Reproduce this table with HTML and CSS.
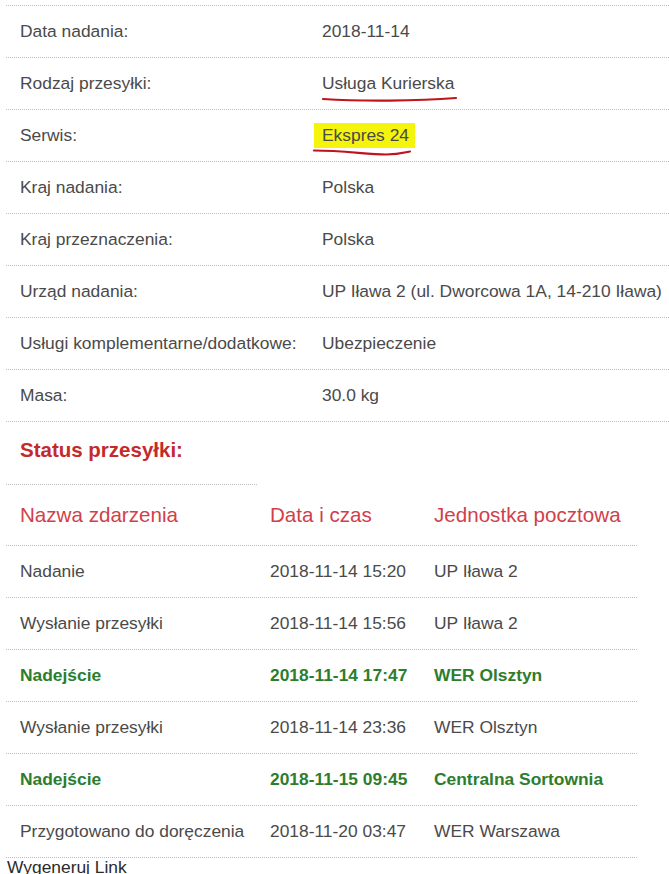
FILE: index.html
```html
<!DOCTYPE html>
<html lang="pl">
<head>
<meta charset="utf-8">
<title>Przesyłka</title>
<link rel="stylesheet" href="styles.css">
</head>
<body>
<div class="page">
  <div class="details">
    <div class="row"><div class="label">Data nadania:</div><div class="value">2018-11-14</div></div>
    <div class="row"><div class="label">Rodzaj przesyłki:</div><div class="value mark">Usługa Kurierska
      <svg class="underline u1" width="140" height="8" viewBox="0 0 140 8"><path d="M1 3 C 40 5.5, 95 5, 134 2"/></svg></div></div>
    <div class="row"><div class="label">Serwis:</div><div class="value mark"><span class="hl">Ekspres 24</span>
      <svg class="underline u2" width="100" height="10" viewBox="0 0 100 10"><path d="M1 2.5 C 30 2.5, 55 6.5, 73 6.5 C 85 6.5, 92 4.5, 97 3.5"/></svg></div></div>
    <div class="row"><div class="label">Kraj nadania:</div><div class="value">Polska</div></div>
    <div class="row"><div class="label">Kraj przeznaczenia:</div><div class="value">Polska</div></div>
    <div class="row"><div class="label">Urząd nadania:</div><div class="value">UP Iława 2 (ul. Dworcowa 1A, 14-210 Iława)</div></div>
    <div class="row"><div class="label">Usługi komplementarne/dodatkowe:</div><div class="value">Ubezpieczenie</div></div>
    <div class="row"><div class="label">Masa:</div><div class="value">30.0 kg</div></div>
  </div>

  <h2 class="status-title">Status przesyłki:</h2>
  <div class="rule"></div>

  <div class="events">
    <div class="ev ev-head"><div>Nazwa zdarzenia</div><div>Data i czas</div><div>Jednostka pocztowa</div></div>
    <div class="ev"><div>Nadanie</div><div>2018-11-14 15:20</div><div>UP Iława 2</div></div>
    <div class="ev"><div>Wysłanie przesyłki</div><div>2018-11-14 15:56</div><div>UP Iława 2</div></div>
    <div class="ev ev-arrival"><div>Nadejście</div><div>2018-11-14 17:47</div><div>WER Olsztyn</div></div>
    <div class="ev"><div>Wysłanie przesyłki</div><div>2018-11-14 23:36</div><div>WER Olsztyn</div></div>
    <div class="ev ev-arrival"><div>Nadejście</div><div>2018-11-15 09:45</div><div>Centralna Sortownia</div></div>
    <div class="ev"><div>Przygotowano do doręczenia</div><div>2018-11-20 03:47</div><div>WER Warszawa</div></div>
  </div>

  <a class="gen-link" href="#">Wygeneruj Link</a>
</div>
</body>
</html>
```

FILE: styles.css
```css
html, body {
  margin: 0;
  padding: 0;
  background: #ffffff;
}

body {
  font-family: "Liberation Sans", Arial, sans-serif;
  font-size: 17.4px;
  color: #4a4a4a;
  overflow: hidden;
}

.page {
  padding-left: 6px;
  padding-top: 5px;
}

.details {
  border-top: 1px dotted #bdbdbd;
}

.row {
  display: grid;
  grid-template-columns: 316px 1fr;
  height: 51px;
  border-bottom: 1px dotted #bdbdbd;
}

.label,
.value {
  display: flex;
  align-items: center;
  white-space: nowrap;
}

.label {
  padding-left: 14px;
}

.mark {
  position: relative;
}

.hl {
  background: #f4f40c;
  margin-left: -8px;
  padding: 2px 6px 2px 8px;
}

.underline {
  position: absolute;
  overflow: visible;
}

.underline path {
  fill: none;
  stroke: #c0141c;
  stroke-width: 2.2;
  stroke-linecap: round;
}

.u1 {
  left: 0;
  top: 38px;
}

.u2 {
  left: -9px;
  top: 38px;
}

.status-title {
  margin: 16px 0 0;
  padding-left: 14px;
  font-size: 20.5px;
  font-weight: bold;
  color: #c42a2c;
  line-height: 24px;
}

.rule {
  width: 251px;
  margin-top: 22px;
  border-top: 1px dotted #bdbdbd;
}

.events {
  width: 631px;
}

.ev {
  display: grid;
  grid-template-columns: 264px 164px 1fr;
  height: 51px;
  align-items: center;
  border-bottom: 1px dotted #bdbdbd;
  white-space: nowrap;
}

.ev > div:first-child {
  padding-left: 14px;
}

.ev-head {
  height: 60px;
  font-size: 20.6px;
  color: #d1404a;
}

.ev-arrival {
  font-weight: bold;
  color: #2d7d2d;
}

.gen-link {
  display: block;
  margin-left: 1px;
  line-height: 19px;
  color: #2b2b2b;
  text-decoration: none;
}
```
